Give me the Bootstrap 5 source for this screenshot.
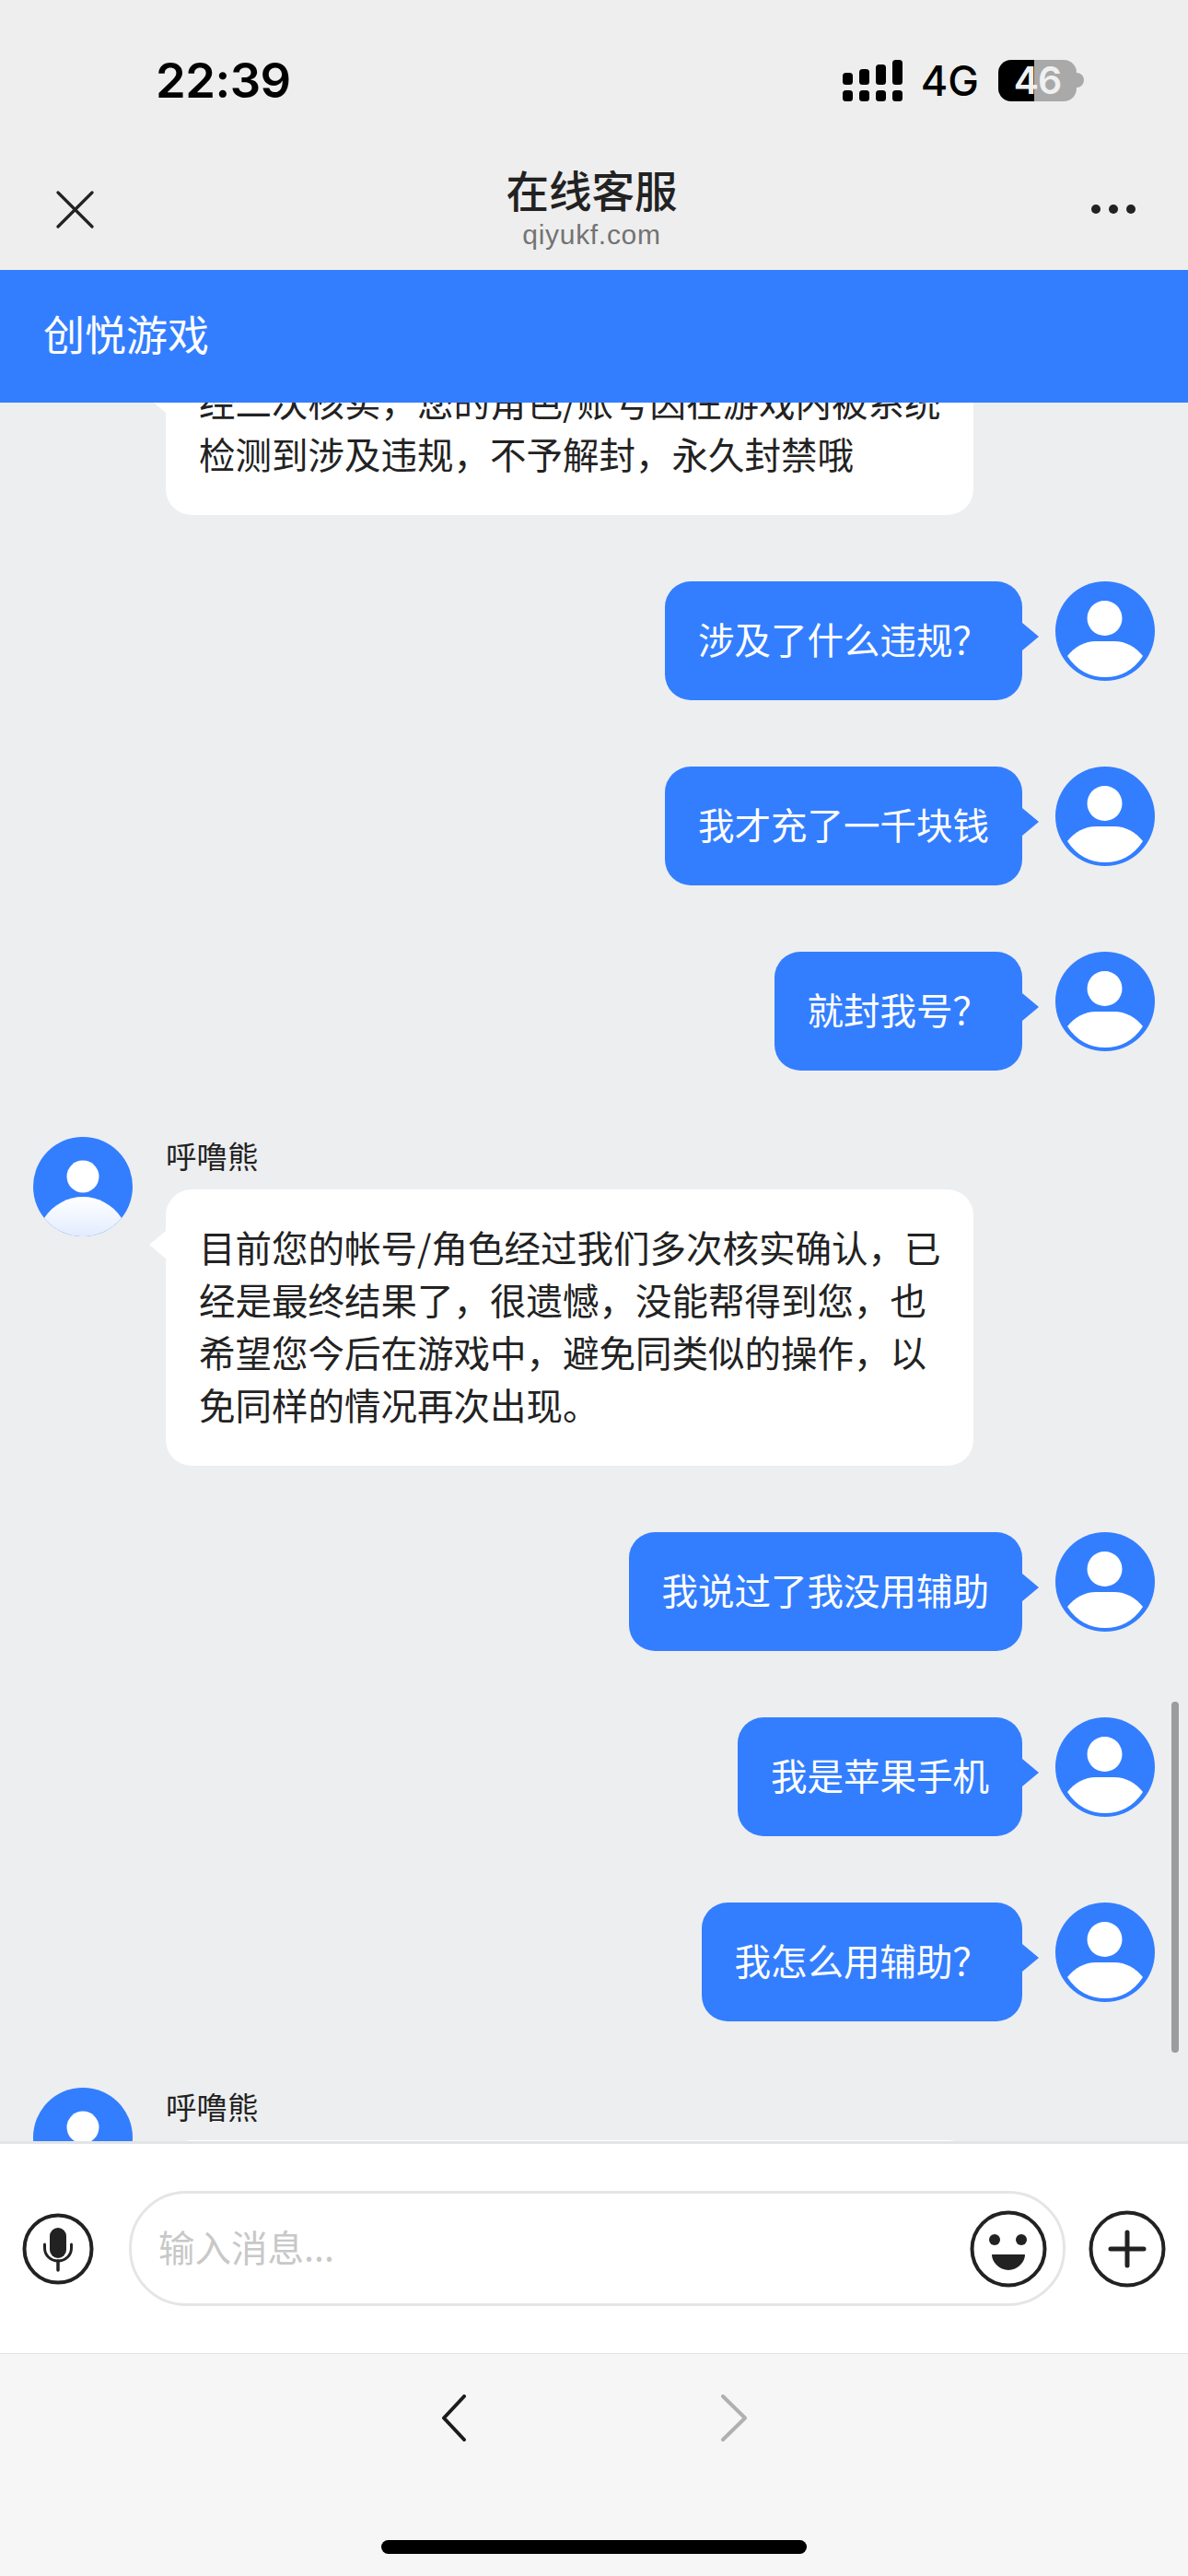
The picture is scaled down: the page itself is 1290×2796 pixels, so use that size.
<!DOCTYPE html>
<html lang="zh-CN">
<head>
<meta charset="utf-8">
<title>在线客服</title>
<link rel="stylesheet" href="https://cdn.jsdelivr.net/npm/bootstrap@5.3.0/dist/css/bootstrap.min.css">
<style>
html,body{height:2796px;margin:0;overflow:hidden}
body{font-family:"Noto Sans CJK SC","Noto Sans",sans-serif;color:#222;background:#edeef0}
.shell{width:1290px;height:2796px}
.top-area{background:#eee;height:293px;flex:none}
.status-row{height:174px;padding:0 113px 0 169px}
.clock{font:600 52.5px/1 Inter,sans-serif;color:#000;letter-spacing:-.5px}
.net{font:500 45px/1 Inter,sans-serif;color:#000;margin:0 21px 0 20px}
.batt{width:85px;height:45px;border-radius:14px;background:linear-gradient(90deg,#000 46%,#a9a9a9 46%);font:600 41px/45px Inter,sans-serif;color:#f0f0f0;letter-spacing:-1px;text-align:center}
.batt-nub{width:8px;height:16px;border-radius:0 8px 8px 0;background:#a9a9a9}
.nav-row{height:119px}
.nav-side-l{width:300px;padding:33px 0 0 61px}
.nav-mid{width:685px;text-align:center}
.nav-side-r{width:305px;padding:48px 57px 0 0}
.nav-title{font-size:46.5px;line-height:60px;font-weight:500;color:#222;margin-top:1px}
.nav-sub{font:30px/36px "Liberation Sans",sans-serif;color:#737373;letter-spacing:.7px;margin-top:2px}
.brand-bar{height:144px;background:#337eff;color:#fff;font-size:45px;line-height:138px;padding-left:47px;flex:none}
.chat-view{height:1887px;flex:none;overflow:hidden;position:relative;background:#edeef0}
.chat-list{margin-top:-64px;gap:72px}
.msg-r{padding-right:36px;gap:36px}
.msg-l{padding-left:36px;gap:36px}
.face{width:108px;height:108px;flex:none;display:block}
.who{font-size:33.500px;line-height:40px;margin-bottom:17px;color:#222}
.bub{font-size:39.500px;line-height:57px;padding:33px 36px 39px 36px;border-radius:28px;position:relative}
.bub-in{background:#fff;color:#222;width:877px;padding-right:30px}
.bub-out{background:#337eff;color:#fff}
.bub-in::before,.bub-out::after{content:"";position:absolute;top:45px;width:18px;height:30px}
.bub-in::before{left:-18px;background:#fff;clip-path:polygon(0 50%,100% 0,100% 100%)}
.bub-out::after{right:-18px;background:#337eff;clip-path:polygon(100% 50%,0 0,0 100%)}
.thumb{position:absolute;right:10px;top:1410px;width:8px;height:381px;border-radius:4px;background:#9c9c9c}
.composer{height:231px;flex:none;background:#fff;border-top:3px solid #e3e4e6;border-bottom:1px solid #e4e4e4;padding-left:24px}
.mic-ico{width:78px;height:78px;flex:none;margin-right:38px}
.pill{width:1017px;height:125px;border:3px solid #e5e5e5;border-radius:62px;padding:0 17px 0 29px;flex:none}
.pill-input{font-size:39.500px;line-height:57px;color:#222;background:transparent;margin-bottom:6px}
.pill-input::placeholder{color:#c8c8c8;opacity:1}
.round-ico{width:84px;height:84px;flex:none}
.plus-ico{margin-left:25px}
.browser-bar{flex:1 1 auto;background:#f6f6f6;padding-top:44px}
.nav-arrows{padding-left:480px;gap:277px}
.home-pill{width:462px;height:15px;border-radius:8px;background:#000;margin:107px auto 0}
</style>
</head>
<body>
<svg width="0" height="0" class="position-absolute">
  <defs>
    <linearGradient id="fade" x1="0" y1="0" x2="0" y2="1"><stop offset="0" stop-color="#fff"/><stop offset="1" stop-color="#e2ecff"/></linearGradient>
    <symbol id="agent" viewBox="0 0 108 108">
      <circle cx="54" cy="54" r="54" fill="#337eff"/>
      <circle cx="54" cy="43" r="17.500" fill="#fff"/>
      <path d="M12 88C22 73 38 65 54 65C70 65 86 73 96 88A54 54 0 0 1 12 88Z" fill="url(#fade)"/>
    </symbol>
    <symbol id="me" viewBox="0 0 108 108">
      <circle cx="54" cy="54" r="54" fill="#337eff"/>
      <circle cx="53.500" cy="40" r="19" fill="#fff"/>
      <path d="M13 81C21 71 32 65 44 65H64C76 65 87 71 95 81C85 97 70 104 54 104C38 104 23 97 13 81Z" fill="#fff"/>
    </symbol>
  </defs>
</svg>
<div class="shell d-flex flex-column">
  <div class="top-area">
    <div class="status-row d-flex align-items-center justify-content-between">
      <span class="clock">22:39</span>
      <div class="d-flex align-items-center">
        <svg width="65" height="45" viewBox="0 0 65 45" fill="#000">
          <rect x="0" y="14" width="11" height="13" rx="3.500"/><rect x="18" y="10" width="11" height="17" rx="3.500"/><rect x="36" y="5" width="11" height="22" rx="3.500"/><rect x="54" y="0" width="11" height="27" rx="3.500"/>
          <rect x="0" y="33" width="11" height="12" rx="3.500"/><rect x="18" y="33" width="11" height="12" rx="3.500"/><rect x="36" y="33" width="11" height="12" rx="3.500"/><rect x="54" y="33" width="11" height="12" rx="3.500"/>
        </svg>
        <span class="net">4G</span>
        <span class="batt">46</span>
        <span class="batt-nub"></span>
      </div>
    </div>
    <div class="nav-row d-flex align-items-start">
      <div class="nav-side-l">
        <svg width="41" height="41" viewBox="0 0 41 41" fill="none" stroke="#222" stroke-width="3.200" stroke-linecap="round" class="d-block"><path d="M2 2L39 39M39 2L2 39"/></svg>
      </div>
      <div class="nav-mid">
        <div class="nav-title">在线客服</div>
        <div class="nav-sub">qiyukf.com</div>
      </div>
      <div class="nav-side-r">
        <svg width="48" height="10" viewBox="0 0 48 10" fill="#222" class="d-block ms-auto"><circle cx="5" cy="5" r="5"/><circle cx="24" cy="5" r="5"/><circle cx="43" cy="5" r="5"/></svg>
      </div>
    </div>
  </div>
  <div class="brand-bar">创悦游戏</div>
  <div class="chat-view">
    <div class="chat-list d-flex flex-column">
      <div class="msg-l d-flex align-items-start">
        <div class="face"></div>
        <div class="bub bub-in">经二次核实，您的角色/账号因在游戏内被系统检测到涉及违规，不予解封，永久封禁哦</div>
      </div>
      <div class="msg-r d-flex justify-content-end align-items-start">
        <div class="bub bub-out">涉及了什么违规？</div>
        <svg class="face"><use href="#me"/></svg>
      </div>
      <div class="msg-r d-flex justify-content-end align-items-start">
        <div class="bub bub-out">我才充了一千块钱</div>
        <svg class="face"><use href="#me"/></svg>
      </div>
      <div class="msg-r d-flex justify-content-end align-items-start">
        <div class="bub bub-out">就封我号？</div>
        <svg class="face"><use href="#me"/></svg>
      </div>
      <div class="msg-l d-flex align-items-start">
        <svg class="face"><use href="#agent"/></svg>
        <div>
          <div class="who">呼噜熊</div>
          <div class="bub bub-in">目前您的帐号/角色经过我们多次核实确认，已经是最终结果了，很遗憾，没能帮得到您，也希望您今后在游戏中，避免同类似的操作，以免同样的情况再次出现。</div>
        </div>
      </div>
      <div class="msg-r d-flex justify-content-end align-items-start">
        <div class="bub bub-out">我说过了我没用辅助</div>
        <svg class="face"><use href="#me"/></svg>
      </div>
      <div class="msg-r d-flex justify-content-end align-items-start">
        <div class="bub bub-out">我是苹果手机</div>
        <svg class="face"><use href="#me"/></svg>
      </div>
      <div class="msg-r d-flex justify-content-end align-items-start">
        <div class="bub bub-out">我怎么用辅助？</div>
        <svg class="face"><use href="#me"/></svg>
      </div>
      <div class="msg-l d-flex align-items-start">
        <svg class="face"><use href="#agent"/></svg>
        <div>
          <div class="who">呼噜熊</div>
          <div class="bub bub-in">&nbsp;</div>
        </div>
      </div>
    </div>
    <div class="thumb"></div>
  </div>
  <div class="composer d-flex align-items-center">
    <svg class="mic-ico" viewBox="0 0 78 78" fill="none" stroke="#222">
      <circle cx="39" cy="39" r="36.500" stroke-width="4"/>
      <rect x="30" y="16" width="18" height="33" rx="9" fill="#222" stroke="none"/>
      <path d="M24.500 34V38C24.500 46 31 52 39 52S53.500 46 53.500 38V34" stroke-width="3" stroke-linecap="round"/>
      <path d="M39 52V62" stroke-width="3.500" stroke-linecap="round"/>
    </svg>
    <div class="pill d-flex align-items-center">
      <input class="pill-input form-control border-0 shadow-none p-0 flex-grow-1 rounded-0" type="text" placeholder="输入消息..." aria-label="输入消息">
      <svg class="round-ico" viewBox="0 0 84 84" fill="none" stroke="#222">
        <circle cx="42" cy="42" r="39.500" stroke-width="4"/>
        <circle cx="27" cy="32" r="6" fill="#222" stroke="none"/>
        <circle cx="56" cy="32" r="6" fill="#222" stroke="none"/>
        <path d="M24 48.500Q24 48 24.500 48H59.500Q60 48 60 48.500C60 56 52 65 42 65S24 56 24 48.500Z" fill="#222" stroke="none"/>
      </svg>
    </div>
    <svg class="round-ico plus-ico" viewBox="0 0 84 84" fill="none" stroke="#222">
      <circle cx="42" cy="42" r="39.500" stroke-width="4"/>
      <path d="M42 24V60M24 42H60" stroke-width="5" stroke-linecap="round"/>
    </svg>
  </div>
  <div class="browser-bar">
    <div class="nav-arrows d-flex">
      <svg width="26" height="51" viewBox="0 0 26 51" fill="none" stroke="#1c1c1c" stroke-width="4" stroke-linecap="round" stroke-linejoin="round"><path d="M24 2L2 25.500L24 49"/></svg>
      <svg width="28" height="51" viewBox="0 0 28 51" fill="none" stroke="#b0b0b0" stroke-width="4" stroke-linecap="round" stroke-linejoin="round"><path d="M2 2L26 25.500L2 49"/></svg>
    </div>
    <div class="home-pill"></div>
  </div>
</div>
<script src="https://cdn.jsdelivr.net/npm/bootstrap@5.3.0/dist/js/bootstrap.bundle.min.js"></script>
</body>
</html>
